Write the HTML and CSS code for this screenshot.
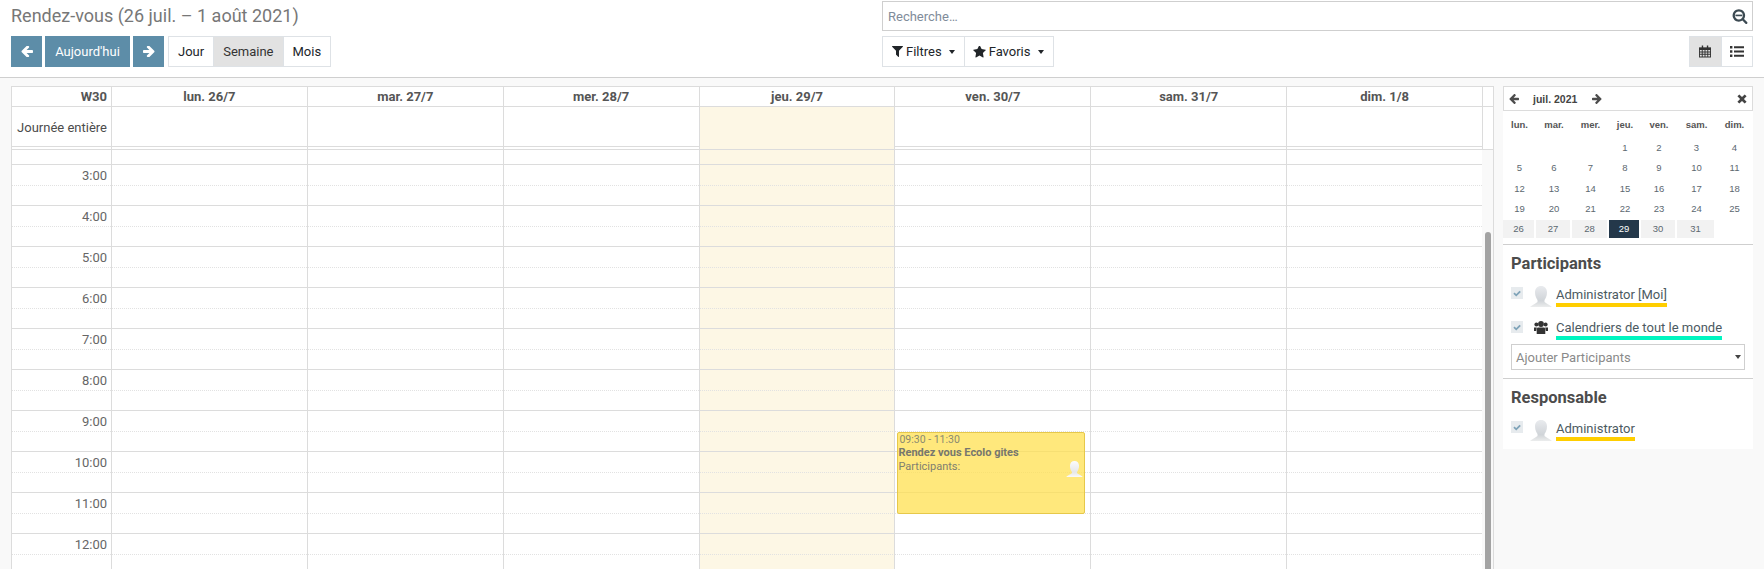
FILE: index.html
```html
<!DOCTYPE html>
<html lang="fr">
<head>
<meta charset="utf-8">
<title>Rendez-vous</title>
<link rel="stylesheet" href="styles.css">
</head>
<body>
<svg class="defs" width="0" height="0" aria-hidden="true">
  <defs>
    <linearGradient id="avatar-grad" x1="0" y1="0" x2="0" y2="1">
      <stop offset="0" stop-color="#e9ebee"/>
      <stop offset=".7" stop-color="#d0d4d8"/>
      <stop offset="1" stop-color="#eceded"/>
    </linearGradient>
    <linearGradient id="avatar-grad-light" x1="0" y1="0" x2="0" y2="1">
      <stop offset="0" stop-color="#fbfbfb"/>
      <stop offset=".7" stop-color="#e6e7e8"/>
      <stop offset="1" stop-color="#fafafa"/>
    </linearGradient>
    <symbol id="i-left" viewBox="128 256 1536 1408"><path d="M1664 896v128q0 53-32.5 90.5t-84.5 37.500h-704l293 294q38 36 38 90t-38 90l-75 76q-38 38-90 38-53 0-91-38l-651-652q-37-37-37-90 0-52 37-91l651-650q38-38 91-38 52 0 90 38l75 74q38 38 38 91t-38 91l-293 293h704q52 0 84.500 37.500t32.500 90.500z"/></symbol>
    <symbol id="i-right" viewBox="128 256 1536 1408"><path d="M1600 960q0 54-37 91l-651 651q-39 37-91 37-51 0-90-37l-75-75q-38-38-38-91t38-91l293-293h-704q-52 0-84.500-37.500t-32.500-90.500v-128q0-53 32.500-90.500t84.500-37.500h704l-293-294q-38-36-38-90t38-90l75-75q38-38 90-38 53 0 91 38l651 651q37 35 37 90z"/></symbol>
    <symbol id="i-avatar" viewBox="0 0 22 21">
      <path fill="url(#avatar-grad)" d="M11 0c3.600 0 6 2.500 6 6.500 0 3.500-1.500 6-2.500 7.500v2c1.500 1.500 5 2.500 7.500 5H0c2.500-2.500 6-3.500 7.500-5v-2C6.500 12.500 5 10 5 6.500 5 2.500 7.400 0 11 0z"/>
    </symbol>
    <symbol id="i-avatar-light" viewBox="0 0 22 21">
      <path fill="url(#avatar-grad-light)" d="M11 0c3.600 0 6 2.500 6 6.500 0 3.500-1.500 6-2.500 7.500v2c1.500 1.500 5 2.500 7.500 5H0c2.500-2.500 6-3.500 7.500-5v-2C6.500 12.500 5 10 5 6.500 5 2.500 7.400 0 11 0z"/>
    </symbol>
    <symbol id="i-check" viewBox="0 0 12 12"><path d="M3 6.200l2.200 2.100 4-4" fill="none" stroke="#7fa3b8" stroke-width="1.800"/></symbol>
  </defs>
</svg>
<div class="page">
  <header class="panel">
    <div class="panel-left">
      <h1 class="title">Rendez-vous (26 juil. – 1 août 2021)</h1>
      <div class="toolbar">
        <button class="btn-primary btn-square"><svg class="ico-arrow"><use href="#i-left"/></svg></button>
        <button class="btn-primary btn-today">Aujourd'hui</button>
        <button class="btn-primary btn-square"><svg class="ico-arrow"><use href="#i-right"/></svg></button>
        <div class="group scale-group">
          <button class="seg">Jour</button>
          <button class="seg seg-active">Semaine</button>
          <button class="seg">Mois</button>
        </div>
      </div>
    </div>
    <div class="panel-right">
      <div class="search">
        <span class="search-text">Recherche…</span>
        <svg class="ico-search" viewBox="0 0 1792 1792"><path d="M1216 832q0-185-131.500-316.500t-316.500-131.500-316.500 131.500-131.500 316.500 131.500 316.500 316.500 131.500 316.500-131.500 131.500-316.500zm512 832q0 52-38 90t-90 38q-54 0-90-38l-343-342q-179 124-399 124-143 0-273.500-55.500t-225-150-150-225-55.500-273.500 55.500-273.500 150-225 225-150 273.500-55.500 273.500 55.500 225 150 150 225 55.500 273.500q0 220-124 399l343 343q37 37 37 90z"/><rect x="384" y="740" width="770" height="184"/></svg>
      </div>
      <div class="toolbar toolbar-split">
        <div class="group">
          <button class="seg seg-menu"><svg class="ico-filter" viewBox="190 256 1410 1408"><path d="M1595 295q17 41-14 70l-493 493v742q0 42-39 59-13 5-25 5-27 0-45-19l-256-256q-19-19-19-45v-486l-493-493q-31-29-14-70 17-39 59-39h1280q42 0 59 39z"/></svg>Filtres<span class="caret"></span></button>
          <button class="seg seg-menu"><svg class="ico-star" viewBox="64 128 1664 1560"><path d="M1728 647q0 22-26 48l-363 354 86 500q1 7 1 20 0 21-10.500 35.500t-30.500 14.500q-19 0-40-12l-449-236-449 236q-22 12-40 12-21 0-31.500-14.500t-10.500-35.500q0-6 2-20l86-500-364-354q-25-27-25-48 0-37 56-46l502-73 225-455q19-41 49-41t49 41l225 455 502 73q56 9 56 46z"/></svg>Favoris<span class="caret"></span></button>
        </div>
        <div class="group view-group">
          <button class="seg seg-icon seg-active">
            <svg class="ico-view" viewBox="0 0 13 13"><path d="M0 2h13v11H0z" fill="#333"/><path d="M1 5h2v1.500H1zM4 5h2v1.500H4zM7 5h2v1.500H7zM10 5h2v1.500h-2zM1 7.500h2V9H1zM4 7.500h2V9H4zM7 7.500h2V9H7zM10 7.500h2V9h-2zM1 10h2v2H1zM4 10h2v2H4zM7 10h2v2H7zM10 10h2v2h-2z" fill="#e2e2e2"/><path d="M3 0h1.500v3.500H3zM8.500 0H10v3.500H8.500z" fill="#333"/></svg>
          </button>
          <button class="seg seg-icon">
            <svg class="ico-view ico-list" viewBox="0 0 14 11"><path d="M0 0h2.400v2.400H0zM0 4.300h2.400v2.400H0zM0 8.600h2.400V11H0zM4 .2h10v2H4zM4 4.500h10v2H4zM4 8.800h10v2H4z"/></svg>
          </button>
        </div>
      </div>
    </div>
  </header>
  <main class="content">
    <section class="calendar">
      <div class="row head-row">
        <div class="cell axis week">W30</div>
        <div class="cell day-head">lun. 26/7</div>
        <div class="cell day-head">mar. 27/7</div>
        <div class="cell day-head">mer. 28/7</div>
        <div class="cell day-head">jeu. 29/7</div>
        <div class="cell day-head">ven. 30/7</div>
        <div class="cell day-head">sam. 31/7</div>
        <div class="cell day-head">dim. 1/8</div>
        <div class="cell gutter"></div>
      </div>
      <div class="row allday-row">
        <div class="cell axis allday-label">Journée entière</div>
        <div class="cell"></div><div class="cell"></div><div class="cell"></div>
        <div class="cell today"></div>
        <div class="cell"></div><div class="cell"></div><div class="cell"></div>
        <div class="cell gutter"></div>
      </div>
      <div class="time-area" id="time-area">
        <div class="scroll-thumb"></div>
      </div>
    </section>
    <aside class="side">
      <div class="mini-head">
        <svg class="mini-arrow"><use href="#i-left"/></svg>
        <span class="mini-title">juil. 2021</span>
        <svg class="mini-arrow"><use href="#i-right"/></svg>
        <svg class="mini-close" viewBox="0 0 12 12"><path d="M2.800 .5L6 3.700 9.200 .5l2.300 2.300L8.300 6l3.200 3.200-2.300 2.300L6 8.300l-3.200 3.200L.5 9.200 3.700 6 .5 2.800z"/></svg>
      </div>
      <div class="mini-grid" id="mini-grid"></div>
      <div class="filter">
        <h3 class="filter-title">Participants</h3>
        <div class="filter-item">
          <span class="check"><svg><use href="#i-check"/></svg></span>
          <svg class="avatar"><use href="#i-avatar"/></svg>
          <span class="name name-yellow">Administrator [Moi]</span>
        </div>
        <div class="filter-item filter-item-2">
          <span class="check"><svg><use href="#i-check"/></svg></span>
          <span class="avatar-slot"><svg class="ico-users" viewBox="0 0 14 13"><circle cx="2.400" cy="3.400" r="2"/><circle cx="11.600" cy="3.400" r="2"/><circle cx="7" cy="3" r="2.900"/><path d="M0 6.500h2.800L2.200 10H0zM14 6.500h-2.800l.6 3.500H14z"/><path d="M3.600 6.500h6.800l.9 1.200V13H2.700V7.700z"/></svg></span>
          <span class="name name-teal">Calendriers de tout le monde</span>
        </div>
        <div class="select"><span>Ajouter Participants</span><span class="caret caret-select"></span></div>
      </div>
      <div class="filter filter-last">
        <h3 class="filter-title">Responsable</h3>
        <div class="filter-item">
          <span class="check"><svg><use href="#i-check"/></svg></span>
          <svg class="avatar"><use href="#i-avatar"/></svg>
          <span class="name name-yellow">Administrator</span>
        </div>
      </div>
    </aside>
  </main>
</div>
<script src="app.js"></script>
</body>
</html>
```
FILE: app.js
```js
const area = document.getElementById('time-area');
const rows = [{ label: '', cls: 'stub-row' }];
for (let h = 3; h <= 12; h++) rows.push({ label: h + ':00', cls: 'hour-row' });
rows.forEach((r) => {
  const row = document.createElement('div');
  row.className = 'row ' + r.cls;
  for (let c = 0; c < 8; c++) {
    const cell = document.createElement('div');
    cell.className = 'cell' + (c === 0 ? ' axis time' : '') + (c === 4 ? ' today' : '');
    if (c === 0) cell.textContent = r.label;
    if (r.label === '9:00' && c === 5) {
      const ev = document.createElement('div');
      ev.className = 'event';
      ev.innerHTML = '<div class="ev-time">09:30 - 11:30</div><div class="ev-title">Rendez vous Ecolo gites</div><div class="ev-part">Participants:</div><svg class="ev-avatar"><use href="#i-avatar-light"/></svg>';
      cell.appendChild(ev);
    }
    row.appendChild(cell);
  }
  const gutter = document.createElement('div');
  gutter.className = 'cell gutter';
  row.appendChild(gutter);
  area.insertBefore(row, area.lastElementChild);
});
const mini = document.getElementById('mini-grid');
['lun.', 'mar.', 'mer.', 'jeu.', 'ven.', 'sam.', 'dim.'].forEach((d) => {
  const el = document.createElement('div');
  el.className = 'mini-dow';
  el.textContent = d;
  mini.appendChild(el);
});
for (let i = 0; i < 3; i++) mini.appendChild(document.createElement('div'));
for (let d = 1; d <= 25; d++) {
  const el = document.createElement('div');
  el.className = 'mini-day';
  el.textContent = d;
  mini.appendChild(el);
}
for (let d = 26; d <= 31; d++) {
  const el = document.createElement('div');
  el.className = 'mini-day week-day' + (d === 29 ? ' selected' : '');
  el.textContent = d;
  mini.appendChild(el);
}
```
FILE: styles.css
```css
* { box-sizing: border-box; }
html, body { margin: 0; height: 100%; overflow: hidden; }
body { font-family: Roboto, "Liberation Sans", sans-serif; font-size: 13px; color: #4c4c4c; background: #fff; }
button { font: inherit; margin: 0; cursor: pointer; }
.defs { position: absolute; }
.page { height: 100vh; display: flex; flex-direction: column; }

.panel { height: 78px; flex: none; display: flex; border-bottom: 1px solid #cfcfcf; padding: 1px 11px 0; background: #fff; }
.panel-left { width: 871px; flex: none; }
.panel-right { flex: 1; min-width: 0; }
.title { margin: 0; font-size: 18px; font-weight: 400; line-height: 29px; height: 35px; color: #777; }
.toolbar { display: flex; height: 31px; }
.toolbar-split { justify-content: space-between; margin-top: 5px; }
.btn-primary { background: #5d8da8; color: #fff; border: 0; height: 31px; margin-right: 3px; padding: 0; }
.btn-square { width: 31px; display: flex; align-items: center; justify-content: center; }
.btn-today { width: 85px; }
.ico-arrow { width: 12px; height: 11px; fill: #fff; }
.group { display: flex; border: 1px solid #dee2e6; height: 31px; background: #fff; }
.scale-group { margin-left: 1px; }
.seg { background: #fff; border: 0; border-right: 1px solid #dee2e6; color: #212529; padding: 0 9px; height: 29px; display: flex; align-items: center; }
.seg:last-child { border-right: 0; }
.seg-active { background: #e2e2e2; color: #333; }
.seg-menu { padding: 0 9px; }
.seg-menu + .seg-menu { padding: 0 9px 0 8px; }
.ico-filter { width: 11px; height: 11px; fill: #212529; margin-right: 3px; }
.ico-star { width: 13px; height: 12px; fill: #212529; margin-right: 3px; }
.caret { width: 0; height: 0; border-left: 3.500px solid transparent; border-right: 3.500px solid transparent; border-top: 4px solid #212529; margin-left: 7px; }
.view-group { width: 64px; }
.seg-icon { width: 31px; padding: 0; justify-content: center; flex: 1; }
.ico-view { width: 12px; height: 13px; }
.ico-list { width: 14px; height: 11px; fill: #333; }
.search { height: 30px; border: 1px solid #cfcfcf; display: flex; align-items: center; justify-content: space-between; padding: 0 4px 0 5px; }
.search-text { color: #7f8c9a; }
.ico-search { width: 16px; height: 16px; fill: #3c4a52; }

.content { flex: 1; min-height: 0; display: flex; background: #f9f9f9; padding: 8px 11px 0; overflow: hidden; }
.calendar { width: 1483px; flex: none; border: 1px solid #dcdcdc; border-bottom: 0; background: #fff; display: flex; flex-direction: column; overflow: hidden; }
.row { display: grid; grid-template-columns: 99px repeat(7, 195.860px) 1fr; flex: none; }
.cell { border-left: 1px solid #dcdcdc; position: relative; min-width: 0; }
.cell:first-child { border-left: 0; }
.head-row { height: 20px; border-bottom: 1px solid #dcdcdc; }
.axis { text-align: right; padding-right: 4px; }
.week, .day-head { font-weight: 700; line-height: 19px; color: #555; }
.day-head { text-align: center; }
.allday-row { height: 40px; border-bottom: 1px solid #dcdcdc; }
.allday-label { line-height: 42px; color: #4c4c4c; }
.today { background: #fdf7e5; }
.time-area { position: relative; flex: 1; min-height: 0; overflow: hidden; border-top: 1px solid #dcdcdc; margin-top: 2px; }
.stub-row { height: 14px; }
.hour-row { height: 41px; }
.hour-row .cell { border-top: 1px solid #dcdcdc; background-image: linear-gradient(to right, #e2e2e2 1px, transparent 1px); background-size: 2px 1px; background-position: 0 20px; background-repeat: repeat-x; }
.hour-row .cell.today { background-color: #fdf7e5; }
.gutter { background: #fff; }
.time-area .gutter, .hour-row .cell.gutter { border: 0; background: #f9f9f9; }
.time { line-height: 20px; color: #666; padding-top: 1px; }
.scroll-thumb { position: absolute; right: 2px; top: 82px; bottom: 0; width: 6px; background: #a3a3a3; border-radius: 3px 3px 0 0; }

.event { position: absolute; z-index: 1; left: 2px; top: 21px; width: 188px; height: 82px; background: rgba(255, 224, 80, .75); border: 1px solid #e6c84a; border-radius: 2px; color: #8a8a70; padding: 0; font-size: 11px; line-height: 14px; overflow: hidden; }
.ev-time { font-size: 10.500px; line-height: 13px; padding-left: 1px; }
.ev-title { font-weight: 700; color: #77776e; }
.ev-part { color: #807f70; }
.ev-avatar { position: absolute; right: 1px; top: 28px; width: 17px; height: 16px; }

.side { width: 250px; margin-left: 9px; flex: none; align-self: flex-start; background: #fff; }
.mini-head { height: 25px; border: 1px solid #dcdcdc; display: flex; align-items: center; padding: 0 5px; }
.mini-arrow { width: 10px; height: 10px; fill: #4c4c4c; flex: none; margin-top: 1px; }
.mini-title { font-family: "Liberation Sans", sans-serif; font-size: 10.500px; font-weight: 700; margin: 0 15px 0 14px; color: #444; }
.mini-close { width: 10px; height: 10px; fill: #444; margin-left: auto; }
.mini-grid { display: grid; grid-template-columns: 33px 36px 37px 32px 36px 39px 37px; grid-template-rows: 27px repeat(5, 20.250px); height: 134px; font-family: "Liberation Sans", sans-serif; font-size: 9.500px; border-bottom: 1px solid #cfcfcf; }
.mini-dow { font-weight: 700; text-align: center; line-height: 28px; color: #555; }
.mini-day { text-align: center; line-height: 20px; color: #5c6870; }
.week-day { background: #f2f2f2; margin-right: 2px; height: 18px; line-height: 18px; margin-top: 1px; }
.selected { background: #24384a; color: #fff; }
.filter { padding: 9px 8px 0; border-bottom: 1px solid #cfcfcf; height: 134px; }
.filter-last { border-bottom: 0; height: 70px; }
.filter-title { margin: 0; font-size: 16.500px; font-weight: 700; line-height: 20px; color: #4c4c4c; }
.filter-item { display: flex; align-items: flex-start; margin-top: 12px; height: 21px; }
.check { width: 12px; height: 12px; background: #e7ebee; flex: none; display: block; margin-top: 1px; }
.check svg { width: 12px; height: 12px; display: block; }
.filter-item-2 .check { margin-top: 2px; }
.avatar { width: 22px; height: 21px; margin: 0 4px 0 7px; flex: none; }
.avatar-slot { width: 22px; margin: 0 4px 0 7px; flex: none; display: flex; justify-content: center; padding-top: 2px; }
.ico-users { width: 14px; height: 13px; fill: #333; }
.name { font-size: 13px; line-height: 17px; color: #4c5a62; border-bottom: 4px solid; }
.name-yellow { border-bottom-color: #ffce00; }
.name-teal { border-bottom-color: #00f5c0; }
.select { height: 26px; border: 1px solid #cfcfcf; margin-top: 4px; display: flex; justify-content: space-between; align-items: center; padding: 0 3px 0 4px; color: #8a8a8a; }
.caret-select { border-top-color: #444; }
```
